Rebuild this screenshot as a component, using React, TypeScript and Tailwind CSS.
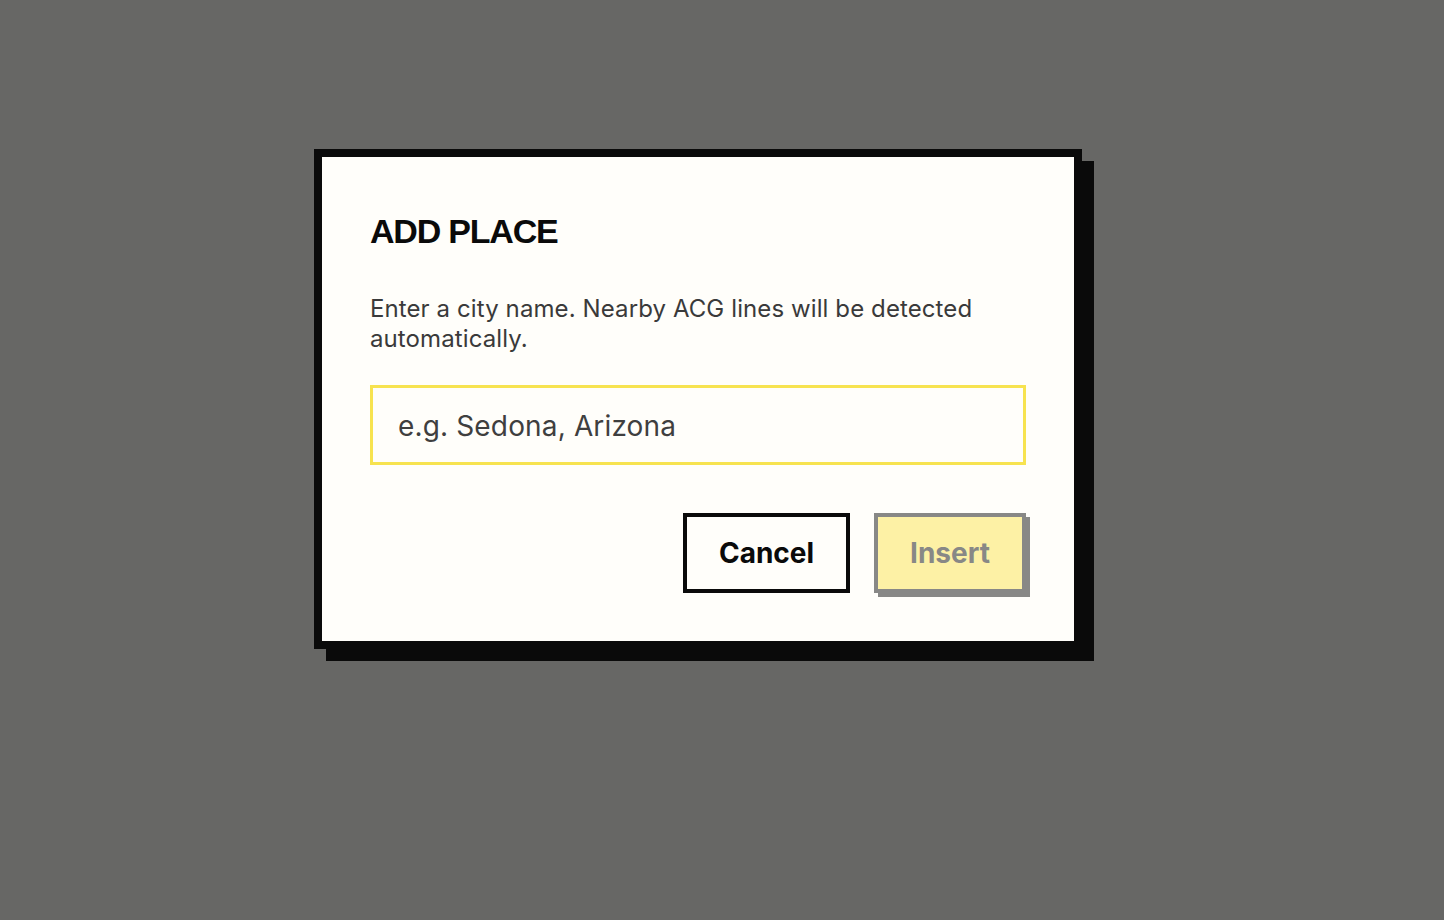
export default function App() {
  return (
    <div className="min-h-screen w-full bg-[#676765] pt-[149px] pl-[314px] font-['Inter','Noto_Sans',sans-serif]">
      {/* Dialog */}
      <div className="flex w-[768px] flex-col border-8 border-[#0a0a0a] bg-[#fffefa] px-12 pt-[54px] pb-12 shadow-[12px_12px_0_#0a0a0a]">
        <h2 className="font-['Liberation_Sans',Arial,sans-serif] text-[34px] leading-[40px] font-bold tracking-[-1.2px] text-[#0a0a0a]">
          ADD PLACE
        </h2>
        <p className="mt-[43px] text-[24px] leading-[30px] tracking-[0.1px] text-[#3a3a3a]">
          Enter a city name. Nearby ACG lines will be detected automatically.
        </p>
        <input
          type="text"
          placeholder="e.g. Sedona, Arizona"
          className="mt-[31px] h-[80px] w-full border-[3px] border-[#f7e34f] bg-[#fffefa] px-[25px] pt-px text-[28px] tracking-[0.15px] text-[#3a3a3a] outline-none placeholder:text-[#3f3f3f]"
        />
        <div className="mt-12 flex justify-end gap-6">
          <button className="h-[80px] w-[167px] border-4 border-[#0a0a0a] bg-[#fffefa] text-[28px] font-bold text-[#0a0a0a]">
            Cancel
          </button>
          <button className="h-[80px] w-[152px] border-4 border-[#888886] bg-[#fdf1a5] text-[28px] font-bold text-[#888886] shadow-[4px_4px_0_#888886]">
            Insert
          </button>
        </div>
      </div>
    </div>
  );
}
